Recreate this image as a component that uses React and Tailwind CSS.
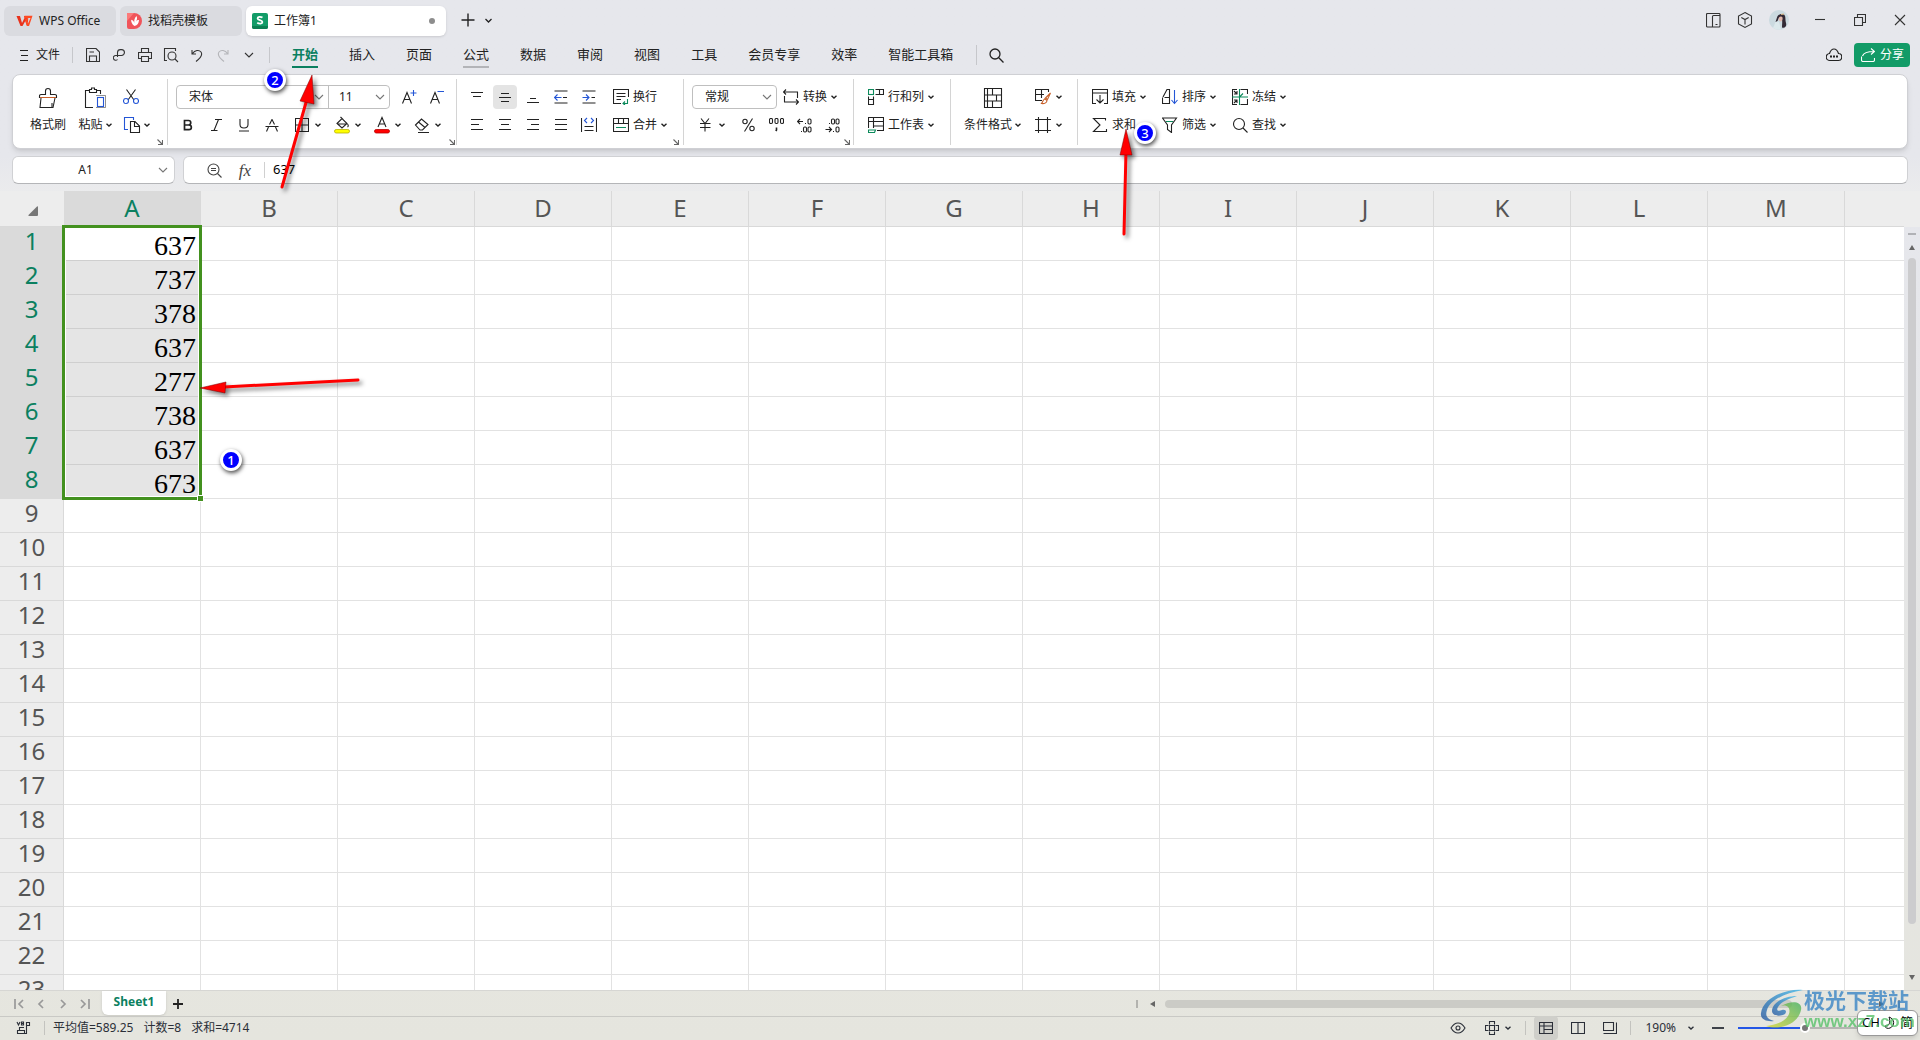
import React from "react";

const COLUMNS = ["A", "B", "C", "D", "E", "F", "G", "H", "I", "J", "K", "L", "M"];
const VALUES = [637, 737, 378, 637, 277, 738, 637, 673];
const ROWS = Array.from({ length: 23 }, (_, i) => i + 1);
const MENU = ["开始", "插入", "页面", "公式", "数据", "审阅", "视图", "工具", "会员专享", "效率", "智能工具箱"];

const BLUE = "#2456d6";
const GREEN = "#0b8a5b";
const ORANGE = "#c8602a";

function Icon({ w = 16, h = 16, children, className = "" }) {
  return (
    <svg
      width={w}
      height={h}
      viewBox={`0 0 ${w} ${h}`}
      fill="none"
      stroke="currentColor"
      strokeWidth="1.1"
      className={`shrink-0 ${className}`}
      aria-hidden="true"
    >
      {children}
    </svg>
  );
}

function Caret() {
  return (
    <Icon w={6} h={4}>
      <path d="M0.5 0.8L3 3L5.5 0.8" strokeWidth="1.4" />
    </Icon>
  );
}

function WideCaret({ className = "" }) {
  return (
    <Icon w={10} h={6} className={className}>
      <path d="M1 1L5 5L9 1" />
    </Icon>
  );
}

/* Square tool holding only an icon */
function Tool({ label, active, children }) {
  return (
    <button
      type="button"
      aria-label={label}
      className={`flex h-6 w-6 shrink-0 items-center justify-center rounded ${active ? "bg-[#e4e4e4]" : ""}`}
    >
      {children}
    </button>
  );
}

/* Icon, optional text and an optional drop-down caret */
function DropTool({ label, text, caret = true, children, className = "" }) {
  return (
    <button
      type="button"
      aria-label={label}
      className={`flex h-6 shrink-0 items-center whitespace-nowrap ${text ? "gap-1" : "gap-[3px]"} ${className}`}
    >
      {children}
      {text && <span>{text}</span>}
      {caret && <Caret />}
    </button>
  );
}

function Group({ width, launcher, children }) {
  return (
    <div className={`flex h-[66px] shrink-0 justify-between border-r border-[#d4d4d4] pt-1.5 ${width}`}>
      <div className="flex">{children}</div>
      {launcher && (
        <button type="button" aria-label={launcher} className="mr-1 self-end">
          <Icon w={6} h={6} className="text-[#666]">
            <path d="M0.5 0.5L5 5M5.5 1V5.5H1" />
          </Icon>
        </button>
      )}
    </div>
  );
}

function Lines({ rows }) {
  return (
    <Icon w={14} h={14}>
      {rows.map(([x1, x2, y]) => (
        <path key={y} d={`M${x1} ${y}H${x2}`} />
      ))}
    </Icon>
  );
}

function TitleBar() {
  return (
    <div className="flex h-10 items-center pl-1">
      <button type="button" className="mt-0.5 flex h-[30px] w-28 items-center gap-1.5 rounded-md bg-[#dadbe0] pl-3">
        <svg width="17" height="12" viewBox="0 0 17 12" className="shrink-0" aria-hidden="true">
          <path d="M0.500 1H4L6 8L8.500 3L8 1H11L12.200 5L11 11L9.300 6L6.500 11H4.500Z" fill="#e8321c" />
          <path d="M9 3.500L12.500 3.500L11 7L12 8.500L14.500 3H8.500L8.500 0.800H16.500L13 11H11L10 8.500Z" fill="#ff4a22" />
        </svg>
        WPS Office
      </button>
      <button type="button" className="ml-1 mt-0.5 flex h-[30px] w-[122px] items-center gap-1.5 rounded-md bg-[#dadbe0] pl-[7px]">
        <svg width="15" height="16" viewBox="0 0 15 16" className="shrink-0" aria-hidden="true">
          <path d="M0 0H7A8 8 0 0 1 7 16H2A2 2 0 0 1 0 14Z" fill="#f0545a" />
          <path d="M0 0H7L0 8Z" fill="#fb7a7a" />
          <path d="M7.5 13C5 11.5 4 9 4.2 6.8C6.2 7.5 7 8.5 7.3 10C7 7 7.5 5 9.5 3C10.5 5 10 6.5 9.2 8.5C10 7.2 10.8 6.9 12 7C11.8 10 10.5 12.5 7.5 13Z" fill="#fff" />
        </svg>
        找稻壳模板
      </button>
      <div className="ml-1 mt-0.5 flex h-[30px] w-[200px] items-center rounded-md bg-white pl-1.5 shadow">
        <svg width="16" height="16" viewBox="0 0 16 16" className="mr-1.5 shrink-0" aria-hidden="true">
          <rect width="16" height="16" rx="2" fill="#129c68" />
          <path d="M0 13H16V14A2 2 0 0 1 14 16H2A2 2 0 0 1 0 14Z" fill="#0b7f52" />
          <path d="M10.5 4.600C8.500 3.300 5.500 3.600 5.600 5.500C5.700 7.500 10.400 6.700 10.400 9C10.400 11 7.200 11 5.200 9.700" fill="none" stroke="#fff" strokeWidth="1.800" />
        </svg>
        <span className="flex-1">工作簿1</span>
        <span className="mr-[11px] h-1.5 w-1.5 rounded-full bg-[#8d8d8d]" />
      </div>
      <button type="button" aria-label="新建" className="ml-[15px]">
        <Icon w={14} h={14}>
          <path d="M7 0.5V13.5M0.5 7H13.5" strokeWidth="1.4" />
        </Icon>
      </button>
      <button type="button" aria-label="标签列表" className="ml-2.5">
        <Icon w={7} h={5}>
          <path d="M0.5 1L3.5 4L6.5 1" strokeWidth="1.3" />
        </Icon>
      </button>
      <div className="ml-auto mr-[14px] flex items-center text-[#333]">
        <button type="button" aria-label="分屏" className="flex w-8 justify-center">
          <Icon w={15} h={15}>
            <rect x="0.5" y="0.5" width="13.5" height="13.5" rx="1" />
            <path d="M6.5 14V3.5Q6.500 2.500 7.500 2.500H14M9.500 11.500H11.500" />
          </Icon>
        </button>
        <button type="button" aria-label="应用" className="flex w-8 justify-center">
          <Icon w={16} h={16}>
            <path d="M8 0.6L14.5 4V12L8 15.4L1.5 12V4ZM4.300 5.500L8 7.500L11.700 5.500M8 7.500V12.500" />
          </Icon>
        </button>
        <button type="button" aria-label="账户" className="ml-2 flex justify-center">
          <svg width="20" height="20" viewBox="0 0 20 20" aria-hidden="true">
            <circle cx="10" cy="10" r="10" fill="#cbdae0" />
            <path d="M7 11L10 12L12 19.500A10 10 0 0 1 4 18Z" fill="#dce9ec" />
            <path d="M8 7.500C8.500 5 12 3 15 4.500C17 6 16 9 17 13C18 16 16 18.500 13 17.500C13 14 13.500 12 13 9.500L10 7.500L8.500 11L6.500 12Z" fill="#332a35" />
            <path d="M10 7.500C11 6 13 6 13.500 7.500C14 9.500 13 11.500 11.500 11.500C10 11.500 9.500 9 10 7.500Z" fill="#e3b9ad" />
            <path d="M12 4.500L15 4" stroke="#d9b37e" strokeWidth="1.200" />
          </svg>
        </button>
        <button type="button" aria-label="最小化" className="ml-[11px] flex w-10 justify-center">
          <Icon w={10} h={10}>
            <path d="M0 4.5H10" />
          </Icon>
        </button>
        <button type="button" aria-label="还原" className="flex w-10 justify-center">
          <Icon w={12} h={12}>
            <path d="M0.5 3.5H8.5V11.5H0.5ZM3.5 3.5V0.5H11.5V8.5H8.5" />
          </Icon>
        </button>
        <button type="button" aria-label="关闭" className="ml-3.5 flex justify-center">
          <Icon w={12} h={12}>
            <path d="M1 1L11 11M11 1L1 11" />
          </Icon>
        </button>
      </div>
    </div>
  );
}

function MenuBar() {
  return (
    <div className="flex h-[30px] items-center pl-5">
      <button type="button" className="flex items-center gap-2">
        <Icon w={8} h={12}>
          <path d="M0 1.5H8M1 6.5H8M0 11.5H8" />
        </Icon>
        文件
      </button>
      <span className="ml-3 h-4 w-px bg-[#c6c7cb]" />
      <div className="ml-2 flex items-center gap-0.5 text-[#333]">
        <Tool label="保存">
          <Icon w={14} h={14}>
            <path d="M0.5 0.5H10L13.5 4V13.5H0.5ZM3.5 13.5V8H10.5V13.5M3.5 4H8" />
          </Icon>
        </Tool>
        <Tool label="输出">
          <Icon w={12} h={12}>
            <path d="M4.5 8V3.500A3 3 0 0 1 7.500 0.600H8.500A2.800 2.800 0 0 1 8.500 6.500H3A2.400 2.400 0 1 0 4.500 10.500" />
          </Icon>
        </Tool>
        <Tool label="打印">
          <Icon w={14} h={14}>
            <path d="M3.5 4.5V0.5H10.5V4.5M3.5 10.5H0.5V4.5H13.5V10.5H10.5M3.5 8.5H10.5V13.5H3.5Z" />
          </Icon>
        </Tool>
        <Tool label="打印预览">
          <Icon w={16} h={16}>
            <path d="M4 13.5H1.5V1.5H12.5V4" />
            <circle cx="9" cy="9" r="4" />
            <path d="M12 12L15 15" />
          </Icon>
        </Tool>
        <Tool label="撤销">
          <Icon w={12} h={13}>
            <path d="M1 1V5H5M1.3 4.7C4 1 8 0.5 10 3C12 6 9 9.5 5 12.5" />
          </Icon>
        </Tool>
        <Tool label="恢复">
          <Icon w={12} h={13} className="text-[#b4b5b9]">
            <path d="M11 1V5H7M10.7 4.7C8 1 4 0.5 2 3C0 6 3 9.5 7 12.5" />
          </Icon>
        </Tool>
        <Tool label="更多">
          <WideCaret />
        </Tool>
      </div>
      <span className="ml-2 h-4 w-px bg-[#c6c7cb]" />
      <nav className="ml-[22px] flex items-center gap-[31px] text-[13px]">
        {MENU.map((name) => (
          <a
            key={name}
            href={`#${name}`}
            className={`mt-0.5 whitespace-nowrap border-b-2 pb-0.5 leading-5 ${
              name === "开始"
                ? "border-[#0b8060] font-bold text-[#0b8060]"
                : name === "公式"
                ? "border-[#b3b4b8]"
                : "border-transparent"
            }`}
          >
            {name}
          </a>
        ))}
      </nav>
      <span className="ml-[23px] h-5 w-px bg-[#c6c7cb]" />
      <button type="button" aria-label="搜索" className="ml-3">
        <Icon w={15} h={15}>
          <circle cx="6" cy="6" r="5" strokeWidth="1.3" />
          <path d="M9.8 9.8L14.5 14.5" strokeWidth="1.3" />
        </Icon>
      </button>
      <button type="button" aria-label="云状态" className="ml-auto">
        <Icon w={16} h={14}>
          <path d="M4 12.5A3.5 3.5 0 0 1 3.5 5.5C4.5 2.500 6 1 8 1S11.500 2.500 12.500 5.500A3.500 3.500 0 0 1 12 12.500Z" strokeWidth="1.200" />
          <path d="M4 8.500H6M7 8.500H9M10 8.500H12" strokeWidth="1.800" />
        </Icon>
      </button>
      <button type="button" className="ml-3 mr-[10px] flex h-6 w-14 items-center gap-[5px] rounded bg-[#129b67] pl-[7px] text-white">
        <Icon w={14} h={14}>
          <path d="M0.5 8.5V12A1.5 1.5 0 0 0 2 13.5H12A1.5 1.5 0 0 0 13.5 12V10M1.5 8C2.5 5 5 3.5 13 3.5M10 0.5L13.5 3.5L10 6.5" />
        </Icon>
        分享
      </button>
    </div>
  );
}

function Ribbon() {
  return (
    <div className="mx-3 mt-1 flex h-[75px] items-start overflow-hidden rounded-lg border border-[#cfd0d4] bg-white pt-1 shadow-md">
      <Group width="w-[155px]" launcher="剪贴板设置">
        <button type="button" className="ml-[17px] flex w-9 flex-col items-center whitespace-nowrap">
          <Icon w={20} h={22} className="mt-0.5">
            <path d="M1.5 11V8.5Q1.5 7.5 3 7.5H7.5V4A2.5 2.5 0 1 1 12.5 4V7.5H17Q18.5 7.5 18.5 8.5V11" />
            <path d="M3 11L2 20.5H15L17 11" />
            <path d="M2 10.5H18" stroke={ORANGE} />
            <path d="M14 20V16" />
          </Icon>
          <span className="mt-2 leading-4">格式刷</span>
        </button>
        <button type="button" className="ml-3 flex w-[34px] flex-col items-center whitespace-nowrap">
          <Icon w={22} h={22} className="mt-0.5">
            <path d="M9 20.500H1.500V3.500H5M13 3.500H16.500V7M5.500 5.500V2.500H7.500V1H10.500V2.500H12.500V5.500Z" />
            <rect x="13.500" y="10.500" width="6" height="9" stroke={BLUE} />
            <path d="M12 8.500H21.500M21.500 8.500V20.500H12" strokeWidth="0.500" />
          </Icon>
          <span className="mt-2 flex items-center gap-[3px] leading-4">
            粘贴
            <Caret />
          </span>
        </button>
        <div className="ml-[7px] flex flex-col gap-1">
          <Tool label="剪切">
            <Icon w={16} h={16}>
              <path d="M3.5 0.5L11 11M12.5 0.5L5 11" />
              <circle cx="3" cy="12" r="2.5" stroke={BLUE} />
              <circle cx="13" cy="12" r="2.5" stroke={BLUE} />
            </Icon>
          </Tool>
          <DropTool label="复制">
            <Icon w={18} h={16} className="ml-1">
              <path d="M5 12.5H1.5V0.5H10.5V3" stroke={BLUE} />
              <path d="M7.5 4.5H12L16.5 9V15.5H7.5ZM11.5 5V9.5H16" />
            </Icon>
          </DropTool>
        </div>
      </Group>

      <Group width="w-[289px]" launcher="字体设置">
        <div className="ml-2 flex flex-col gap-1">
          <div className="flex items-center">
            <div className="flex h-6 rounded border border-[#bfbfbf]">
              <label className="flex items-center border-r border-[#bfbfbf]">
                <select aria-label="字体" className="h-full w-[137px] appearance-none bg-transparent pl-3 outline-none">
                  <option>宋体</option>
                </select>
                <WideCaret className="mr-1 text-[#777]" />
              </label>
              <label className="flex items-center">
                <select aria-label="字号" className="h-full w-[46px] appearance-none bg-transparent pl-2.5 outline-none">
                  <option>11</option>
                </select>
                <WideCaret className="mr-1 text-[#777]" />
              </label>
            </div>
            <span className="w-[7px]" />
            <Tool label="增大字号">
              <Icon w={16} h={16}>
                <path d="M1.5 14.5L6 3.5L10.5 14.5M3 10.5H9" />
                <path d="M9.5 4H15.5M12.5 1V7" stroke={BLUE} />
              </Icon>
            </Tool>
            <span className="w-1" />
            <Tool label="减小字号">
              <Icon w={16} h={16}>
                <path d="M1.5 14.5L6 3.5L10.5 14.5M3 10.5H9" />
                <path d="M8.5 2.5H15" stroke={BLUE} />
              </Icon>
            </Tool>
          </div>
          <div className="flex gap-1">
            <Tool label="加粗">
              <Icon w={10} h={12}>
                <path d="M1.5 1.5H5.5A2.2 2.2 0 0 1 5.5 6H1.5ZM1.5 6H6A2.3 2.3 0 0 1 6 10.7H1.5Z" strokeWidth="1.7" />
              </Icon>
            </Tool>
            <Tool label="倾斜">
              <Icon w={12} h={12}>
                <path d="M5 0.5H12M1 11.5H7.5M8.5 0.5L4 11.5" />
              </Icon>
            </Tool>
            <Tool label="下划线">
              <Icon w={12} h={14}>
                <path d="M2 1V6.5Q2 10 6 10T10 6.5V1M1 13H11" />
              </Icon>
            </Tool>
            <Tool label="删除线">
              <Icon w={14} h={13}>
                <path d="M4.5 5.5L7 0.5L9.5 5.5M0.5 7.5H13.5M3.5 8L1.5 12.5M10.5 8L12.5 12.5" />
              </Icon>
            </Tool>
            <DropTool label="边框" className="ml-1 w-9">
              <span className="flex w-5 justify-center">
                <Icon w={14} h={14}>
                  <path d="M0.5 0.5H13.5V13.5H0.5ZM7 0.5V13.5M0.5 7H13.5" />
                </Icon>
              </span>
            </DropTool>
            <DropTool label="填充颜色" className="w-9">
              <Icon w={20} h={18}>
                <path d="M5 7.5L10 2.5L15 7.5L10 12ZM8.5 1L11 3.5M5.5 8H14M15.5 8Q17 10 15.5 11" />
                <rect x="2.5" y="13.5" width="15" height="3.5" rx="1.7" fill="#ffff00" stroke="#b8b000" strokeWidth="0.8" />
              </Icon>
            </DropTool>
            <DropTool label="字体颜色" className="w-9">
              <Icon w={20} h={18}>
                <path d="M6 11L10 1.5L14 11M7.5 8H12.5" />
                <rect x="2.5" y="13.5" width="15" height="3.5" rx="1.7" fill="#ff0000" stroke="#b80000" strokeWidth="0.8" />
              </Icon>
            </DropTool>
            <DropTool label="清除" className="w-9">
              <Icon w={20} h={18}>
                <path d="M3.5 9L9.500 3L16 8.500L10.500 14H8ZM6.500 6L13 11.500M6 16.500H17" />
              </Icon>
            </DropTool>
          </div>
        </div>
      </Group>

      <Group width="w-[227px]" launcher="对齐设置">
        <div className="ml-2 flex flex-col gap-1">
          <div className="flex items-center gap-1">
            <Tool label="顶端对齐"><Lines rows={[[1, 13, 2.5], [3, 11, 6.5]]} /></Tool>
            <Tool label="垂直居中" active><Lines rows={[[3, 11, 3.5], [1, 13, 7.5], [3, 11, 11.5]]} /></Tool>
            <Tool label="底端对齐"><Lines rows={[[4, 10, 8.5], [1, 13, 12.5]]} /></Tool>
            <Tool label="减少缩进">
              <Icon w={14} h={14}>
                <path d="M0.5 1H13.5M0.5 13H13.5M9 7.5H13" />
                <path d="M0.5 7.5H7.5M3.5 4.5L0.5 7.5L3.5 10.5" stroke={BLUE} />
              </Icon>
            </Tool>
            <Tool label="增加缩进">
              <Icon w={14} h={14}>
                <path d="M0.5 1H13.5M0.5 13H13.5M9.5 7.5H13" />
                <path d="M0.5 7.5H7M4 4.5L7 7.5L4 10.5" stroke={BLUE} />
              </Icon>
            </Tool>
            <DropTool text="换行" caret={false} className="ml-2">
              <Icon>
                <path d="M8 14.5H0.5V0.5H15.5V8M3.5 4.5H12.5M3.5 7.5H12.5M3.5 10.5H8" />
                <path d="M14.5 10V14.5H10M12 12.5L10 14.5L12 16" stroke={GREEN} />
              </Icon>
            </DropTool>
          </div>
          <div className="flex items-center gap-1">
            <Tool label="左对齐"><Lines rows={[[1, 13, 1.5], [1, 9, 6.5], [1, 13, 11.5]]} /></Tool>
            <Tool label="居中"><Lines rows={[[1, 13, 1.5], [3, 11, 6.5], [1, 13, 11.5]]} /></Tool>
            <Tool label="右对齐"><Lines rows={[[1, 13, 1.5], [5, 13, 6.5], [1, 13, 11.5]]} /></Tool>
            <Tool label="两端对齐"><Lines rows={[[1, 13, 1.5], [1, 13, 6.5], [1, 13, 11.5]]} /></Tool>
            <Tool label="分散对齐">
              <Icon>
                <path d="M0.5 1V15M15.5 1V15M3.5 9.5H12.5M3.5 13.5H12.5" />
                <path d="M6 1L3.5 3.5L6 6M10 1L12.5 3.5L10 6" stroke={BLUE} />
              </Icon>
            </Tool>
            <DropTool text="合并" className="ml-2">
              <Icon>
                <path d="M0.5 1.5H15.5V14.5H0.5ZM0.5 6.5H15.5M5.5 1.5V6.5M10.5 1.5V6.5" />
                <path d="M3 10.5H13" stroke={GREEN} />
              </Icon>
            </DropTool>
          </div>
        </div>
      </Group>

      <Group width="w-[170px]" launcher="数字设置">
        <div className="ml-2 flex flex-col gap-1">
          <div className="flex items-center">
            <label className="flex h-6 items-center rounded border border-[#bfbfbf]">
              <select aria-label="数字格式" className="h-full w-[69px] appearance-none bg-transparent pl-3 outline-none">
                <option>常规</option>
              </select>
              <WideCaret className="mr-1 text-[#777]" />
            </label>
            <DropTool text="转换" className="ml-1.5">
              <Icon>
                <path d="M3 0.5L0.5 3L3 5.5M0.5 3H14.5V9M13 15.5L15.5 13L13 10.5M15.5 13H1.5V7" />
              </Icon>
            </DropTool>
          </div>
          <div className="flex items-center gap-1">
            <DropTool label="货币" className="w-10">
              <Icon w={20} h={14} className="ml-1">
                <path d="M5 0.5L9 5.5L13 0.5M4 5.5H14.5M4 9.5H14.5M9 5.5V13.5" />
              </Icon>
            </DropTool>
            <Tool label="百分比">
              <Icon w={13} h={14}>
                <circle cx="3" cy="3.5" r="2.2" />
                <circle cx="10" cy="10.5" r="2.2" />
                <path d="M10.5 0.5L2.5 13.5" />
              </Icon>
            </Tool>
            <Tool label="千位分隔">
              <Icon w={15} h={14}>
                <rect x="0.5" y="0.5" width="3" height="5" rx="1.2" />
                <rect x="6" y="0.5" width="3" height="5" rx="1.2" />
                <rect x="11.5" y="0.5" width="3" height="5" rx="1.2" />
                <path d="M7.5 9.5V12L6.800 13" strokeWidth="1.600" />
              </Icon>
            </Tool>
            <Tool label="增加小数位">
              <Icon w={15} h={15}>
                <path d="M3 1L0.5 3.5L3 6M0.5 3.5H6M8 5.5H9M4 13.5H5" />
                <rect x="11" y="1" width="3" height="5" rx="1.2" />
                <rect x="6.5" y="9" width="3" height="5" rx="1.2" />
                <rect x="11" y="9" width="3" height="5" rx="1.2" />
              </Icon>
            </Tool>
            <Tool label="减少小数位">
              <Icon w={15} h={15}>
                <path d="M4 9L6.5 11.5L4 14M0.5 11.5H6.5M8 13.5H9M4 5.5H5" />
                <rect x="11" y="9" width="3" height="5" rx="1.2" />
                <rect x="6.5" y="1" width="3" height="5" rx="1.2" />
                <rect x="11" y="1" width="3" height="5" rx="1.2" />
              </Icon>
            </Tool>
          </div>
        </div>
      </Group>

      <Group width="w-[97px]">
        <div className="ml-[14px] flex flex-col gap-1">
          <DropTool text="行和列">
            <Icon>
              <path d="M7.5 0.5H15.5V5.5H7.5M11.5 0.5V5.5M0.5 7.5V15.5H5.5V7.5M0.5 10.5H5.5" />
              <rect x="0.5" y="0.5" width="5" height="5" stroke={GREEN} />
            </Icon>
          </DropTool>
          <DropTool text="工作表">
            <Icon>
              <path d="M0.5 11V0.5H15.5V13.5H9M0.5 4.5H15.5M5.5 0.5V11M5.5 9H15.5" />
              <path d="M0.5 13H7.5L6.5 15.5H0.5Z" stroke={GREEN} />
            </Icon>
          </DropTool>
        </div>
      </Group>

      <Group width="w-[127px]">
        <button type="button" className="ml-[13px] flex flex-col items-center whitespace-nowrap">
          <Icon w={20} h={22} className="mt-0.5">
            <path d="M4.5 1.5H1.5V20.5H4.5M1.5 8H4.5M1.5 14H4.5M4.5 1.5H18.5V20.5H4.5ZM4.5 8H18.5M4.5 14H18.5M9.5 1.5V8M13.5 8V14M9.5 14V20.5" />
          </Icon>
          <span className="mt-2 flex items-center gap-[3px] leading-4">
            条件格式
            <Caret />
          </span>
        </button>
        <div className="ml-3.5 flex flex-col gap-1">
          <DropTool label="单元格样式">
            <Icon className="mr-0.5">
              <path d="M7 11.5H0.5V0.5H13.5V3M0.5 5.5H9M6.5 0.5V9" />
              <path d="M15.5 4L9.5 10M15.5 4L12.5 10.5L10.5 9ZM10 10C8 10 8 13 6.5 14.5C9 15 12 14 12 11.5Z" stroke={ORANGE} />
            </Icon>
          </DropTool>
          <DropTool label="单元格">
            <Icon className="mr-0.5">
              <path d="M3.5 0V16M12.5 0V16M0 2.5H16M0 13.5H16" />
            </Icon>
          </DropTool>
        </div>
      </Group>

      <div className="ml-[14px] flex flex-col gap-1 pt-1.5">
        <div className="flex gap-4">
          <DropTool text="填充">
            <Icon>
              <path d="M4 14.5H0.5V0.5H15.5V14.5H12M0.5 4H15.5M8 6V14M4.5 10.5L8 14L11.5 10.5" />
            </Icon>
          </DropTool>
          <DropTool text="排序">
            <Icon>
              <path d="M1 8L5 0.5H7.5V15M2.5 8.5H7.5M0.5 8.5V14.5H7.5" />
              <path d="M12.5 1V14M9.5 11L12.5 14.5L15.5 11" stroke={BLUE} />
            </Icon>
          </DropTool>
          <DropTool text="冻结">
            <Icon>
              <path d="M5 0.5H0.5V15.5H5M8.5 0.5H15.5V5M15.5 10V15.5H8.5M2 2L5 5M5 2V5H2M2 14L5 11M2 11H5V14" />
              <path d="M7.5 0V16M0 8H16M7.5 8L11 4.5" stroke={GREEN} />
            </Icon>
          </DropTool>
        </div>
        <div className="flex gap-4">
          <DropTool text="求和">
            <Icon>
              <path d="M13.5 3.5V1.5H1.5L8 8L1.5 14.5H14.5V12" />
            </Icon>
          </DropTool>
          <DropTool text="筛选">
            <Icon>
              <path d="M0.5 1H14.5L9.5 8V15.5L5.5 12.5V8Z" />
              <path d="M4 4.5H11" stroke={GREEN} />
            </Icon>
          </DropTool>
          <DropTool text="查找">
            <Icon>
              <circle cx="7" cy="7" r="5.5" />
              <path d="M11 11L15.5 15.5" />
            </Icon>
          </DropTool>
        </div>
      </div>
    </div>
  );
}

function FormulaBar() {
  return (
    <div className="mx-3 mt-[7px] flex h-7 gap-2">
      <label className="flex w-[163px] items-center rounded-md border border-[#d0d1d4] border-b-[#b4b5b8] bg-white">
        <input aria-label="名称框" defaultValue="A1" className="min-w-0 flex-1 bg-transparent text-center outline-none" />
        <WideCaret className="mr-1.5 text-[#777]" />
      </label>
      <div className="flex flex-1 items-center rounded-md border border-[#d0d1d4] border-b-[#b4b5b8] bg-white pl-[23px]">
        <button type="button" aria-label="缩小">
          <Icon w={15} h={15} className="text-[#444]">
            <circle cx="6.5" cy="6.5" r="5.5" />
            <path d="M10.5 10.5L14.5 14.5M4 5.5H9M4 7.5H9" />
          </Icon>
        </button>
        <button type="button" aria-label="插入函数" className="ml-4 w-[14px] font-['Liberation_Serif',serif] text-[17px] italic leading-none text-[#444]">
          fx
        </button>
        <span className="ml-3 h-4 w-px bg-[#d0d0d0]" />
        <input aria-label="编辑栏" defaultValue="637" className="ml-2 min-w-0 flex-1 bg-transparent text-[13px] text-black outline-none" />
      </div>
    </div>
  );
}

function Sheet() {
  return (
    <div className="mt-[7px] flex min-h-0 flex-1">
      <div className="relative min-w-0 flex-1 overflow-hidden bg-white">
        <table className="w-full table-fixed border-separate border-spacing-0 font-['Noto_Sans',sans-serif] text-2xl leading-none">
          <colgroup>
            <col className="w-16" />
            {COLUMNS.map((c) => (
              <col key={c} className="w-[137px]" />
            ))}
            <col />
          </colgroup>
          <thead>
            <tr className="h-9">
              <th aria-label="全选" className="border-b border-[#d9d9d9] bg-[#ededed]">
                <svg width="10" height="10" viewBox="0 0 10 10" className="ml-7 mt-1 block" aria-hidden="true">
                  <path d="M9 0.5Q10 0 10 1V9Q10 10 9 10H1Q0 10 0.5 9Z" fill="#777" />
                </svg>
              </th>
              {COLUMNS.map((c) => (
                <th
                  key={c}
                  className={`border-b border-r border-[#d9d9d9] pb-0.5 font-normal ${
                    c === "A" ? "bg-[#dadada] text-[#0b8060]" : "bg-[#ededed] text-[#555]"
                  }`}
                >
                  {c}
                </th>
              ))}
              <th className="border-b border-[#d9d9d9] bg-[#ededed]" />
            </tr>
          </thead>
          <tbody>
            {ROWS.map((n) => (
              <tr key={n} className="h-[34px]">
                <th
                  className={`border-r pb-1.5 font-normal ${
                    n <= VALUES.length
                      ? "border-[#dadada] bg-[#dadada] text-[#0b8060]"
                      : "border-b border-[#d9d9d9] bg-[#ededed] text-[#555]"
                  }`}
                >
                  {n}
                </th>
                {COLUMNS.map((c) => (
                  <td
                    key={c}
                    className={`border-b border-r pr-1 pt-1 text-right font-['Liberation_Serif',serif] text-[28px] text-black ${
                      c === "A" && n <= VALUES.length ? "border-[#cfcfcf]" : "border-[#e2e2e2]"
                    } ${c === "A" && n > 1 && n <= VALUES.length ? "bg-[#e5e5e5]" : ""}`}
                  >
                    {c === "A" ? VALUES[n - 1] : null}
                  </td>
                ))}
                <td className="border-b border-[#e2e2e2]" />
              </tr>
            ))}
          </tbody>
        </table>
        {/* Selection frame with its fill handle */}
        <div className="pointer-events-none absolute left-[62px] top-[34px] h-[275px] w-[140px] border-[3px] border-[#43911f]">
          <div className="h-full w-full border border-white" />
          <span className="absolute -bottom-[5px] -right-[5px] h-[7px] w-[7px] border border-white bg-[#43911f]" />
        </div>
      </div>
      <div className="flex w-4 flex-col bg-[#ededed] pt-9">
        <div className="flex flex-1 flex-col items-center bg-gradient-to-b from-[#e6e7ec] to-[#e5e5df] pt-[6px]">
          <span className="h-0.5 w-2 shrink-0 bg-[#b1b2b6]" />
          <svg width="6" height="5" viewBox="0 0 6 5" className="mt-2.5 shrink-0" aria-hidden="true"><path d="M3 0L6 5H0Z" fill="#666" /></svg>
          <span className="mt-2 h-[88%] w-2 rounded-full bg-[#ccccce]" />
          <svg width="6" height="5" viewBox="0 0 6 5" className="mb-2.5 mt-auto shrink-0" aria-hidden="true"><path d="M3 5L6 0H0Z" fill="#666" /></svg>
        </div>
      </div>
    </div>
  );
}

function SheetTabs() {
  const arrows = [
    ["第一张", "M1 0V10M9 1L5 5L9 9"],
    ["上一张", "M7 1L3 5L7 9"],
    ["下一张", "M3 1L7 5L3 9"],
    ["最后一张", "M1 1L5 5L1 9M9 0V10"],
  ];
  return (
    <div className="flex h-[26px] items-center border-t border-[#d6d6d3] pl-2">
      <div className="flex text-[#999]">
        {arrows.map(([name, d]) => (
          <button key={name} type="button" aria-label={name} className="flex w-[22px] justify-center">
            <Icon w={10} h={10}>
              <path d={d} strokeWidth="1.7" />
            </Icon>
          </button>
        ))}
      </div>
      <button type="button" className="-mt-0.5 ml-1.5 h-6 w-16 rounded-b-md bg-white pb-0.5 font-bold text-[#0b8060] shadow-sm">
        Sheet1
      </button>
      <button type="button" aria-label="新建工作表" className="ml-[7px]">
        <Icon w={10} h={10} className="text-[#222]">
          <path d="M5 0V10M0 5H10" strokeWidth="1.8" />
        </Icon>
      </button>
      <div className="ml-auto flex w-[41%] items-center">
        <span className="h-2 w-0.5 bg-[#b3b3af]" />
        <svg width="5" height="6" viewBox="0 0 5 6" className="ml-3 shrink-0" aria-hidden="true"><path d="M0 3L5 0V6Z" fill="#666" /></svg>
        <span className="ml-2.5 h-2 w-4/5 rounded-full bg-[#cbcbc6]" />
        <svg width="5" height="6" viewBox="0 0 5 6" className="ml-auto mr-3.5 shrink-0" aria-hidden="true"><path d="M5 3L0 0V6Z" fill="#666" /></svg>
        <span className="mr-5 h-2 w-0.5 bg-[#999]" />
      </div>
    </div>
  );
}

function StatusBar() {
  return (
    <div className="flex h-6 items-center border-t border-[#c9c9c5] pb-0.5 pl-4 text-[#2b2f38]">
      <button type="button" aria-label="宏">
        <Icon w={15} h={14}>
          <path d="M1 1L2.5 4L4 1M5.5 1V4H7.5V1ZM5.5 2.5H7.5M10.5 13V1.5H13.5V4.5H11M3.5 9.5V6.5H8M1.5 9.5H8.5V12.5H1.5ZM8.5 12.5H10.5" />
        </Icon>
      </button>
      <span className="ml-[13px] h-[14px] w-px bg-[#c3c3bf]" />
      <span className="ml-2 flex gap-2.5 whitespace-nowrap">
        <span>平均值=589.25</span>
        <span>计数=8</span>
        <span>求和=4714</span>
      </span>
      <div className="ml-auto mr-12 flex items-center">
        <button type="button" aria-label="护眼模式">
          <Icon w={16} h={12}>
            <path d="M1 6Q4 1 8 1T15 6Q12 11 8 11T1 6Z" />
            <circle cx="8" cy="6" r="2" />
          </Icon>
        </button>
        <button type="button" aria-label="阅读模式" className="ml-[19px] flex items-center gap-1.5">
          <Icon w={14} h={14}>
            <path d="M4.5 3.5V0.5H9.5V3.5M4.5 10.5V13.5H9.5V10.5M3.5 4.5H0.5V9.5H3.5M10.5 4.5H13.5V9.5H10.5M4.5 4.5H9.5V9.5H4.5Z" />
          </Icon>
          <Caret />
        </button>
        <span className="ml-[14px] h-[14px] w-px bg-[#c3c3bf]" />
        <div className="ml-2 flex h-6 gap-2">
          <button type="button" aria-label="普通视图" className="flex h-6 w-6 items-center justify-center rounded bg-[#cfcfca]">
            <Icon w={14} h={12}>
              <path d="M0.5 0.5H13.5V11.5H0.5ZM0.5 4H13.5M5 0.5V11.5M5 7.5H13.5" />
            </Icon>
          </button>
          <Tool label="页面布局">
            <Icon w={14} h={12}>
              <path d="M0.5 0.5H13.5V11.5H0.5ZM7 0.5V11.5" />
            </Icon>
          </Tool>
          <Tool label="分页预览">
            <Icon w={14} h={12}>
              <path d="M0.5 0.5H10.5V8.5H0.5ZM0.5 11.5H13.5V0.5" />
            </Icon>
          </Tool>
        </div>
        <span className="ml-2 h-[14px] w-px bg-[#c3c3bf]" />
        <button type="button" className="ml-[14px] flex items-center gap-3">
          190%
          <Caret />
        </button>
        <button type="button" aria-label="缩小显示" className="ml-[18px]">
          <Icon w={12} h={12}>
            <path d="M0 6H12" strokeWidth="1.8" />
          </Icon>
        </button>
        <input
          type="range"
          aria-label="显示比例"
          defaultValue="50"
          className="ml-[14px] h-0.5 w-[134px] appearance-none bg-linear-to-r from-[#2456e6] from-50% to-[#b5b5b2] to-50% [&::-webkit-slider-thumb]:h-[10px] [&::-webkit-slider-thumb]:w-[10px] [&::-webkit-slider-thumb]:appearance-none [&::-webkit-slider-thumb]:rounded-full [&::-webkit-slider-thumb]:border-2 [&::-webkit-slider-thumb]:border-white [&::-webkit-slider-thumb]:bg-[#777]"
        />
      </div>
    </div>
  );
}

/* Tutorial marks drawn on top of the window */
function Arrow({ className, w, h, line, head }) {
  return (
    <svg
      width={w}
      height={h}
      viewBox={`0 0 ${w} ${h}`}
      className={`pointer-events-none absolute overflow-visible drop-shadow-[3px_3px_2px_rgba(0,0,0,0.5)] ${className}`}
      aria-hidden="true"
    >
      <path d={line} stroke="#f00" strokeWidth="3" strokeLinecap="round" />
      <path d={head} fill="#f00" stroke="#7a0000" strokeWidth="0.5" />
    </svg>
  );
}

function Badge({ n, className }) {
  return (
    <span
      className={`pointer-events-none absolute flex h-[22px] w-[22px] items-center justify-center rounded-full border-[3px] border-white bg-[#0000ff] text-[13px] font-medium leading-none text-white shadow-[1px_2px_4px_rgba(0,0,0,0.7)] ${className}`}
    >
      {n}
    </span>
  );
}

function Watermark() {
  return (
    <div className="pointer-events-none absolute bottom-0 right-0 h-[52px] w-[162px]">
      <div className="absolute bottom-1 right-0.5 flex h-[26px] w-[61px] items-center justify-center gap-1 rounded-md border border-[#999] bg-white text-[13px] text-black shadow-md">
        <span>CH</span>
        <svg width="12" height="14" viewBox="0 0 12 14" fill="none" stroke="#111" aria-hidden="true">
          <path d="M5 1C11 3 11 10 6 12C4 13 1 12 1 10C5 11 7 6 5 1Z" />
        </svg>
        <span>简</span>
      </div>
      <div className="absolute left-0.5 top-0 flex opacity-75">
        <svg width="44" height="42" viewBox="0 0 44 42" aria-hidden="true">
          <defs>
            <linearGradient id="wmBlue" x1="0" y1="1" x2="1" y2="0">
              <stop offset="0" stopColor="#1c4f9c" />
              <stop offset="1" stopColor="#35b5ec" />
            </linearGradient>
            <linearGradient id="wmGreen" x1="0" y1="1" x2="1" y2="0">
              <stop offset="0" stopColor="#d6d62c" />
              <stop offset="1" stopColor="#3cae58" />
            </linearGradient>
          </defs>
          <path d="M43 2C28 0 3 9 1 25C0 31 6 34 14 33C7 31 5 28 7 22C10 12 25 5 43 2Z" fill="url(#wmBlue)" />
          <path d="M37 8C24 8 12 15 12 23C12 28 20 29 25 26C27 24 26 21 22 22C18 24 16 22 18 19C21 14 28 11 37 8Z" fill="url(#wmBlue)" />
          <path d="M21 18C27 16 31 20 29 26C26 34 15 37 6 38C20 43 38 36 41 22C43 13 31 12 21 18Z" fill="url(#wmGreen)" />
        </svg>
        <div className="flex flex-col whitespace-nowrap">
          <span className="text-[21px] font-bold leading-6 text-[#2f7fc4]">极光下载站</span>
          <span className="font-['Liberation_Sans',sans-serif] text-[17px] font-bold leading-5 text-[#4fbf63]">www.xz7.com</span>
        </div>
      </div>
    </div>
  );
}

export default function App() {
  return (
    <div className="relative flex h-screen flex-col overflow-hidden bg-linear-to-b from-[#e6e7ec] from-15% via-[#ededed] via-20% to-[#e5e5de] font-['Noto_Sans','Noto_Sans_CJK_SC',sans-serif] text-xs text-[#222]">
      <TitleBar />
      <MenuBar />
      <Ribbon />
      <FormulaBar />
      <Sheet />
      <SheetTabs />
      <StatusBar />

      <Arrow className="left-[281px] top-[75px]" w={34} h={114} line="M1 112L26 24" head="M31 0L33 29L19 26Z" />
      <Arrow className="left-[1118px] top-[129px]" w={14} h={108} line="M6 105L8 22" head="M8 0L14 26H2Z" />
      <Arrow className="left-[200px] top-[378px]" w={160} h={16} line="M158 2L24 9" head="M0 10L26 4L25 15Z" />
      <Badge n="1" className="left-[220px] top-[449px]" />
      <Badge n="2" className="left-[264px] top-[69px]" />
      <Badge n="3" className="left-[1134px] top-[122px]" />
      <Watermark />
    </div>
  );
}
